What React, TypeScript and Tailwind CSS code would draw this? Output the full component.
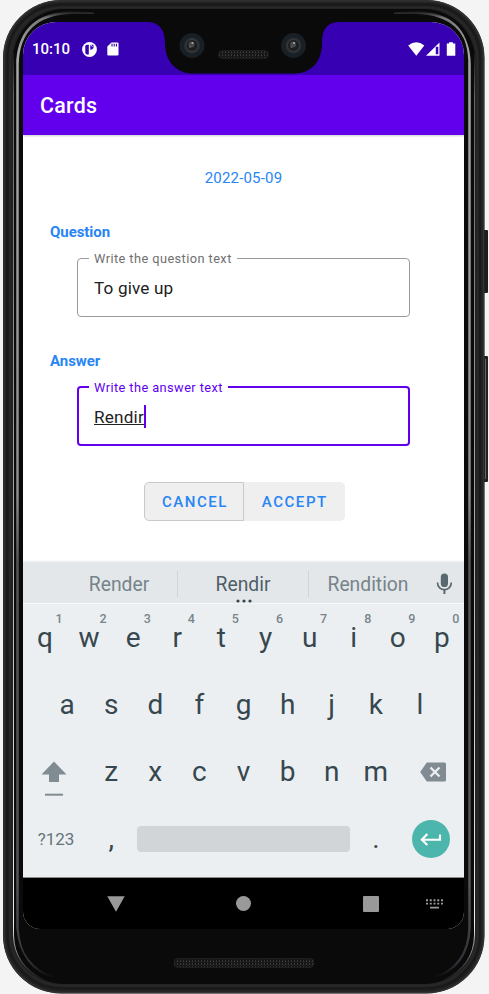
import React from "react";

function PhoneBody() {
  return (
    <svg className="pointer-events-none absolute inset-0" width="489" height="994" viewBox="0 0 489 994">
      <defs>
        <linearGradient id="silver" x1="0" y1="0" x2="0" y2="1">
          <stop offset="0" stopColor="#1c1c1c" />
          <stop offset="0.006" stopColor="#777" />
          <stop offset="0.04" stopColor="#a8a8a8" />
          <stop offset="0.5" stopColor="#8c8c8c" />
          <stop offset="0.57" stopColor="#555" />
          <stop offset="0.9" stopColor="#55555a" />
          <stop offset="0.985" stopColor="#303036" />
          <stop offset="1" stopColor="#0a0a0a" />
        </linearGradient>
        <linearGradient id="thin" x1="0" y1="0" x2="0" y2="1">
          <stop offset="0" stopColor="#111" />
          <stop offset="0.05" stopColor="#666" />
          <stop offset="0.5" stopColor="#aaa" />
          <stop offset="0.94" stopColor="#eee" />
          <stop offset="1" stopColor="#111" />
        </linearGradient>
        <pattern id="mesh" width="3" height="3" patternUnits="userSpaceOnUse">
          <rect width="3" height="3" fill="#111" />
          <rect width="1" height="2" fill="#383838" />
          <rect x="1.500" y="1" width="1" height="2" fill="#262626" />
        </pattern>
      </defs>
      <rect x="483" y="230" width="5" height="63" rx="1" fill="#1e1e1e" />
      <rect x="483" y="356" width="5" height="126" rx="1" fill="#222" />
      <path d="M485.500 359v120" stroke="#666" strokeWidth="1" />
      <rect x="3" y="0" width="481.500" height="993.500" rx="58" fill="#222" />
      <rect x="4" y="1" width="479.500" height="991.500" rx="57" fill="none" stroke="#333" strokeWidth="1.500" />
      <rect x="7.500" y="4.500" width="472.500" height="984" rx="54" fill="none" stroke="#191919" strokeWidth="2" />
      <rect x="10" y="7.500" width="467.500" height="978" rx="52" fill="none" stroke="#292929" strokeWidth="1.500" />
      <rect x="13" y="9" width="462" height="975" rx="51" fill="#0a0a0a" />
      <path d="M13.500 50V935Q14 966 45 980" fill="none" stroke="url(#thin)" strokeWidth="1" />
      <path d="M474.500 50V935Q474 966 443 980" fill="none" stroke="url(#thin)" strokeWidth="1" />
      <path d="M94 13H72Q19 15 18 64V928Q20 968 55 978Q20 966 17 928V60Q21 13 72 12Z" fill="url(#silver)" stroke="url(#silver)" strokeWidth="1.500" />
      <path d="M394 13H416Q469 15 470 64V928Q468 968 433 978Q468 966 469 928V60Q467 13 416 12Z" fill="url(#silver)" stroke="url(#silver)" strokeWidth="1.500" />
      <rect x="174" y="958.500" width="140" height="9" rx="4" fill="url(#mesh)" stroke="#1e1e1e" />
    </svg>
  );
}

function Camera({ x, y }: { x: number; y: number }) {
  return (
    <g transform={`translate(${x} ${y})`}>
      <circle r="12.500" fill="#182026" />
      <circle r="8" fill="#2b2d2f" />
      <circle r="6" fill="#1c1e20" stroke="#3c3f41" />
      <circle cx="-0.500" cy="-1" r="3" fill="#46494c" />
      <circle cx="0.500" cy="-2.500" r="1.100" fill="#a5a8aa" />
      <circle cx="-2" cy="1.500" r="0.800" fill="#777" />
    </g>
  );
}

function Notch() {
  return (
    <svg className="absolute left-[120px] top-0" width="202" height="53" viewBox="143 22 202 53">
      <path d="M143 21.500C157 21.500 165 27 165 43C165 63 178 73.500 193 73.500H294C311 73.500 322 62 322 43C322 27 328 21.500 345 21.500Z" fill="#0a0a0a" />
      <Camera x={192} y={45.500} />
      <Camera x={293.500} y={45.500} />
      <rect x="218.500" y="50.500" width="50" height="8" rx="4" fill="url(#mesh)" stroke="#1c1c1c" />
    </svg>
  );
}

function StatusBar() {
  return (
    <header className="relative flex h-[53px] shrink-0 items-center justify-between bg-[#3700b3] pl-[9px] pr-[8px] text-white">
      <Notch />
      <div className="flex items-center pt-px">
        <span className="w-[50px] text-[15px] font-medium leading-none">10:10</span>
        <svg width="15" height="15" viewBox="0 0 15 15">
          <circle cx="7.500" cy="7.500" r="7.400" fill="#fff" />
          <path d="M3.300 4.300Q3.300 2.700 5 2.700H6.800V12.400H4.800Q3.300 12.200 3.300 10.500Z" fill="#3700b3" />
          <path d="M8.300 2.800H11.500V6Q10.500 7.800 8.300 7.700Z" fill="#3700b3" />
          <path d="M8.400 2.500L10.500 4.700" stroke="#fff" strokeWidth="1" />
        </svg>
        <svg className="ml-[10px]" width="12" height="14" viewBox="0 0 12 14">
          <path d="M4.500 0.500H10.500Q11.500 0.500 11.500 1.500V12.500Q11.500 13.500 10.500 13.500H1.200Q0.300 13.500 0.300 12.500V4.500Z" fill="#fff" />
          <path d="M5 1.700V4.500M7.200 1.700V4.500M9.400 1.700V4.500" stroke="#3700b3" strokeWidth="1.100" />
        </svg>
      </div>
      <svg width="48" height="14" viewBox="0 0 48 14">
        <path d="M0.200 3.600Q8.500 -3 16.300 3.600L8.300 13.700Z" fill="#fff" />
        <path d="M31.500 0.500V13.800H18Z" fill="#fff" />
        <path d="M27.800 4.800H30.300V12.300H27.800Z" fill="#3700b3" />
        <path d="M41 0.300H45V1.500H47.300V13.700H38.800V1.500H41Z" fill="#fff" />
      </svg>
    </header>
  );
}

function Field({ label, active, children }: { label: string; active?: boolean; children: React.ReactNode }) {
  return (
    <fieldset
      className={
        active
          ? "ml-[54px] h-[66px] w-[333px] rounded-[4px] border-2 border-[#6200ee] pl-[15px]"
          : "ml-[54px] h-[66px] w-[333px] rounded-[4px] border border-[#9b9b9b] pl-[16px]"
      }
    >
      <legend
        className={
          active
            ? "-ml-[5px] h-[14px] px-[5px] text-[12.8px] leading-[16px] tracking-[0.42px] text-[#6200ee]"
            : "-ml-[5px] h-[14px] px-[5px] text-[12.8px] leading-[16px] tracking-[0.42px] text-[#707070]"
        }
      >
        {label}
      </legend>
      <div className="flex h-[48px] items-center text-[17.15px] leading-none text-[#212121]">{children}</div>
    </fieldset>
  );
}

function Key({ children, hint }: { children: React.ReactNode; hint?: string }) {
  return (
    <button className="relative flex h-full w-[44.1px] items-center justify-center text-[28px] leading-none text-[#37474f]">
      {children}
      {hint && <span className="absolute right-[4.500px] top-[9px] text-[12.5px] font-medium text-[#78858b]">{hint}</span>}
    </button>
  );
}

function Keyboard() {
  return (
    <section className="flex h-[315px] shrink-0 flex-col bg-[#eceff1]">
      <div className="flex h-[42px] shrink-0 items-center border-b border-[#f8f9fa] bg-[#e4e7ea] pl-[38px] pt-[2px] text-[19.3px] leading-none text-[#76848a] shadow-[0_-1px_2px_rgba(0,0,0,0.08)]">
        <span className="w-[116px] pt-[3px] text-center">Render</span>
        <i className="h-[26px] w-px bg-[#cfd4d7]" />
        <span className="relative w-[130px] pt-[3px] text-center text-[#4f5f67]">
          Rendir
          <svg className="absolute left-[57.500px] top-[27px]" width="17" height="4" viewBox="0 0 17 4">
            <circle cx="2" cy="2" r="1.600" fill="#37474f" />
            <circle cx="8" cy="2" r="1.600" fill="#37474f" />
            <circle cx="14" cy="2" r="1.600" fill="#37474f" />
          </svg>
        </span>
        <i className="h-[26px] w-px bg-[#cfd4d7]" />
        <span className="w-[118px] pt-[3px] text-center">Rendition</span>
        <svg className="ml-[9px]" width="17" height="22" viewBox="0 0 17 22">
          <rect x="4.800" y="0.500" width="7.200" height="13.500" rx="3.600" fill="#59696f" />
          <path d="M1.500 9.500C1.500 19 15.300 19 15.300 9.500" fill="none" stroke="#59696f" strokeWidth="1.700" />
          <path d="M8.400 16.500V21" stroke="#59696f" strokeWidth="2" />
        </svg>
      </div>
      <div className="flex h-[67.2px]">
        {"qwertyuiop".split("").map((k, i) => (
          <Key key={k} hint={String((i + 1) % 10)}>{k}</Key>
        ))}
      </div>
      <div className="flex h-[67.2px] justify-center">
        {"asdfghjkl".split("").map((k) => (
          <Key key={k}>{k}</Key>
        ))}
      </div>
      <div className="flex h-[67.2px] pt-px">
        <button className="flex w-[66.1px] items-center pl-[18px]">
          <svg className="mt-[14px]" width="26" height="36" viewBox="0 0 26 36">
            <path d="M13 0.500L25.500 13.500H18V21H8V13.500H0.500Z" fill="#808c91" />
            <path d="M4 33.700H22" stroke="#808c91" strokeWidth="2" />
          </svg>
        </button>
        {"zxcvbnm".split("").map((k) => (
          <Key key={k}>{k}</Key>
        ))}
        <button className="flex flex-1 items-center justify-center pb-px pl-[4px]">
          <svg width="26" height="20" viewBox="0 0 26 20">
            <path d="M6.800 0.500H24.500Q26 0.500 26 2V18Q26 19.500 24.500 19.500H6.800L0.200 10Z" fill="#808c91" />
            <path d="M10.500 5.500L19.500 14.500M19.500 5.500L10.500 14.500" stroke="#eceff1" strokeWidth="2.300" />
          </svg>
        </button>
      </div>
      <div className="flex h-[67.2px] items-center">
        <button className="w-[66.1px] text-center text-[17px] leading-none text-[#64747a]">?123</button>
        <Key>,</Key>
        <div className="ml-[3.600px] h-[26px] w-[213px] rounded-[4px] bg-[#d1d5d8]" />
        <div className="ml-[4px] h-full"><Key>.</Key></div>
        <button className="ml-[14px] flex size-[38px] items-center justify-center rounded-full bg-[#4db6ac]">
          <svg width="22" height="14" viewBox="0 0 22 14">
            <path d="M20 2.500V7.800H2M7.300 2L1.800 7.800L7.300 13" fill="none" stroke="#fff" strokeWidth="2.100" />
          </svg>
        </button>
      </div>
    </section>
  );
}

function NavBar() {
  return (
    <nav className="flex h-[52px] shrink-0 items-center border-t border-[#8a8c8d] bg-black pl-[84px]">
      <svg width="18" height="16" viewBox="0 0 18 16"><path d="M0.300 0.300H17.700L9 15.800Z" fill="#999" /></svg>
      <span className="ml-[110.500px] size-[15.500px] rounded-full bg-[#999]" />
      <span className="ml-[111.500px] size-[16px] rounded-[1px] bg-[#999]" />
      <svg className="ml-[47px]" width="17" height="10" viewBox="0 0 17 10">
        <path d="M0 1.200H17M0 4.600H17" stroke="#999" strokeWidth="1.900" strokeDasharray="2 1.750" />
        <path d="M4 8.600H13" stroke="#999" strokeWidth="1.900" />
      </svg>
    </nav>
  );
}

export default function App() {
  return (
    <div className="relative flex h-[994px] w-[489px] overflow-hidden bg-[#f4f4f4] pl-[23px] pt-[22px] font-['Roboto',sans-serif]">
      <PhoneBody />
      <div className="relative flex h-[907px] w-[441px] flex-col overflow-hidden rounded-b-[17px] rounded-t-[33px] bg-white">
        <StatusBar />
        <div className="relative flex h-[60px] shrink-0 items-center bg-[#6200ee] pl-[17px] pt-px text-[21.4px] font-medium leading-none tracking-[0.3px] text-white shadow-[0_1px_2px_rgba(0,0,0,0.2)]">
          Cards
        </div>
        <main className="flex h-[427px] shrink-0 flex-col text-[15px] leading-none text-[#2885f4]">
          <p className="mt-[36px] h-[15px] text-center tracking-[0.2px]">2022-05-09</p>
          <h2 className="ml-[27px] mt-[39px] h-[15px] font-bold tracking-[-0.05px]">Question</h2>
          <div className="mt-[11px]">
            <Field label="Write the question text"><span className="tracking-[0.15px]">To give up</span></Field>
          </div>
          <h2 className="ml-[27px] mt-[37px] h-[15px] font-bold tracking-[-0.05px]">Answer</h2>
          <div className="mt-[11px]">
            <Field label="Write the answer text" active>
              <span className="tracking-[0.2px] underline decoration-1 underline-offset-1">Rendir</span>
              <i className="mb-[3px] h-[23px] w-[2px] bg-[#6200ee]" />
            </Field>
          </div>
          <div className="mt-[36px] flex h-[39px] pl-[121px] text-[15px] font-medium tracking-[1.55px]">
            <button className="w-[100px] rounded-l-[5px] border border-[#c9c9c9] bg-[#efefef] pl-[2px] pt-[2px]">CANCEL</button>
            <button className="w-[100.500px] rounded-r-[5px] bg-[#efefef] pl-px pt-[2px]">ACCEPT</button>
          </div>
        </main>
        <Keyboard />
        <NavBar />
      </div>
    </div>
  );
}
